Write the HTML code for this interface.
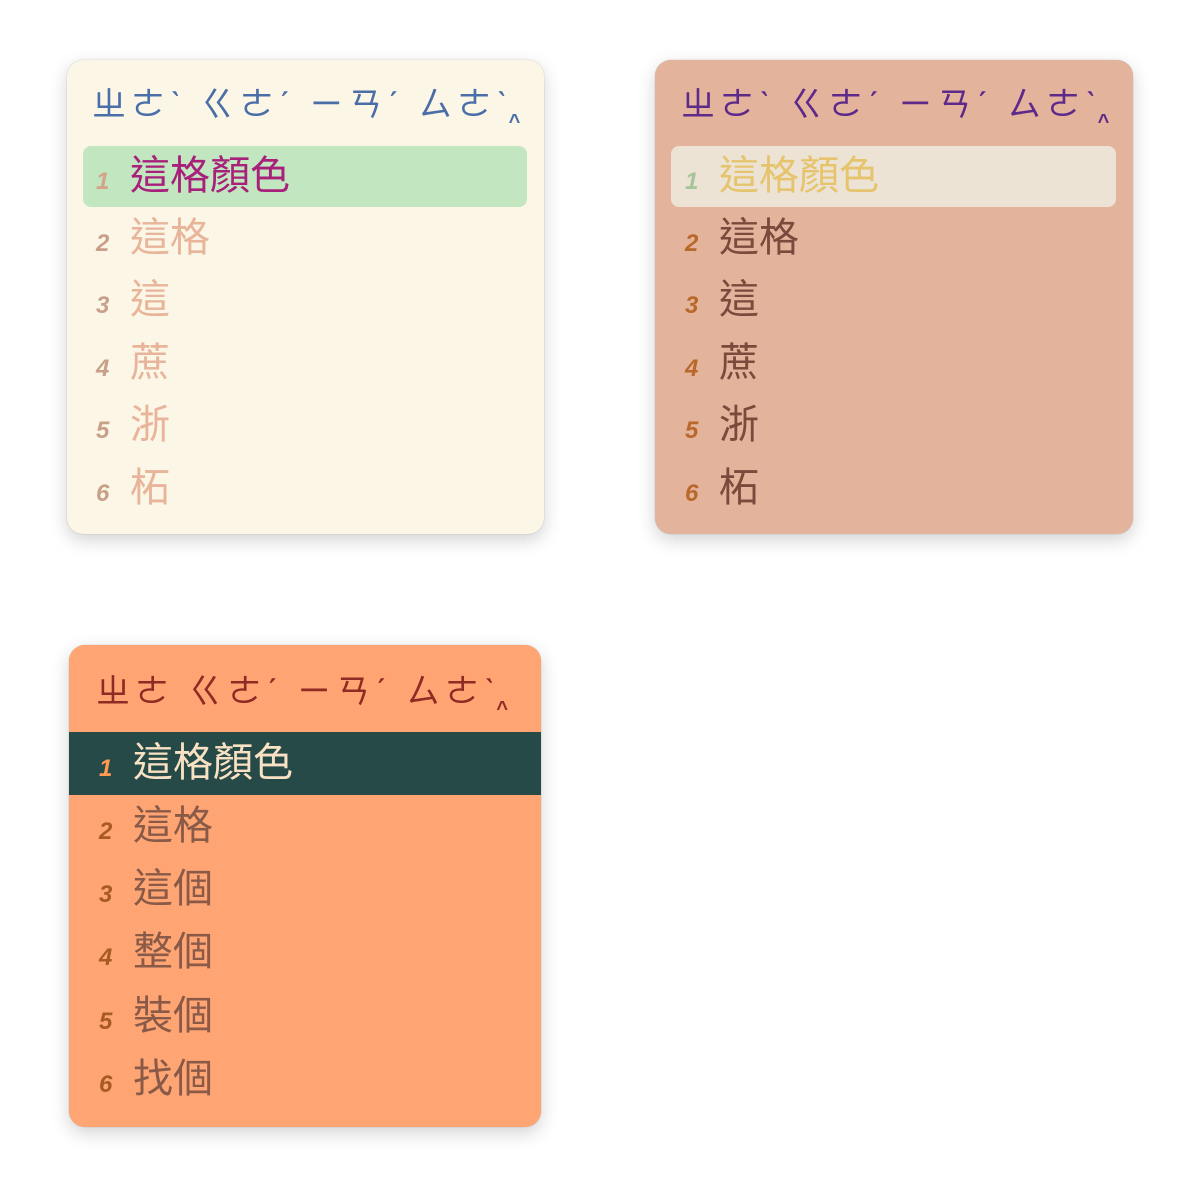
<!DOCTYPE html>
<html><head><meta charset="utf-8"><style>
body{margin:0;width:1200px;height:1200px;background:#fff;position:relative;overflow:hidden;font-family:"Liberation Sans","Noto Sans CJK TC",sans-serif}
.p{position:absolute;border-radius:16px;box-shadow:0 6px 18px rgba(0,0,0,.18),0 0 1px rgba(0,0,0,.3)}
.pre{position:absolute;font-size:34px;white-space:nowrap;letter-spacing:5px;line-height:40px}
.car{font-size:20px;font-weight:bold;position:relative;top:12px;left:-4px;letter-spacing:0}
.hl{position:absolute}
.r{position:absolute;height:62px;line-height:62px;white-space:nowrap}
.n{display:inline-block;width:34px;font-size:24px;font-weight:bold;font-style:italic}
.t{font-size:40px}
</style></head><body>

<div class="p" style="left:67px;top:60px;width:477px;height:474px;background:#fcf6e6"></div>
<div class="pre" style="left:92px;top:85px;color:#4a6ea8">ㄓㄜˋ ㄍㄜˊ ㄧㄢˊ ㄙㄜˋ<span class="car">^</span></div>
<div class="hl" style="left:83px;top:146px;width:444px;height:61px;background:#c1e6c0;border-radius:8px"></div>
<div class="r" style="left:96px;top:145px"><span class="n" style="color:#d4a38a">1</span><span class="t" style="color:#a8207a">這格顏色</span></div>
<div class="r" style="left:96px;top:207px;color:#e8b49a"><span class="n" style="color:#c8a08a">2</span><span class="t">這格</span></div>
<div class="r" style="left:96px;top:269px;color:#e8b49a"><span class="n" style="color:#c8a08a">3</span><span class="t">這</span></div>
<div class="r" style="left:96px;top:332px;color:#e8b49a"><span class="n" style="color:#c8a08a">4</span><span class="t">蔗</span></div>
<div class="r" style="left:96px;top:394px;color:#e8b49a"><span class="n" style="color:#c8a08a">5</span><span class="t">浙</span></div>
<div class="r" style="left:96px;top:457px;color:#e8b49a"><span class="n" style="color:#c8a08a">6</span><span class="t">柘</span></div>

<div class="p" style="left:655px;top:60px;width:478px;height:474px;background:#e3b49b"></div>
<div class="pre" style="left:681px;top:85px;color:#5e2a8a">ㄓㄜˋ ㄍㄜˊ ㄧㄢˊ ㄙㄜˋ<span class="car">^</span></div>
<div class="hl" style="left:671px;top:146px;width:445px;height:61px;background:#ede3d5;border-radius:8px"></div>
<div class="r" style="left:685px;top:145px"><span class="n" style="color:#a6c59a">1</span><span class="t" style="color:#e6c46e">這格顏色</span></div>
<div class="r" style="left:685px;top:207px;color:#7a4a3c"><span class="n" style="color:#b8682a">2</span><span class="t">這格</span></div>
<div class="r" style="left:685px;top:269px;color:#7a4a3c"><span class="n" style="color:#b8682a">3</span><span class="t">這</span></div>
<div class="r" style="left:685px;top:332px;color:#7a4a3c"><span class="n" style="color:#b8682a">4</span><span class="t">蔗</span></div>
<div class="r" style="left:685px;top:394px;color:#7a4a3c"><span class="n" style="color:#b8682a">5</span><span class="t">浙</span></div>
<div class="r" style="left:685px;top:457px;color:#7a4a3c"><span class="n" style="color:#b8682a">6</span><span class="t">柘</span></div>

<div class="p" style="left:69px;top:645px;width:472px;height:482px;background:#ffa573;overflow:hidden">
<div style="position:absolute;left:0;top:87px;width:472px;height:63px;background:#264a48"></div></div>
<div class="pre" style="left:96px;top:672px;color:#8f2a24">ㄓㄜ ㄍㄜˊ ㄧㄢˊ ㄙㄜˋ<span class="car">^</span></div>
<div class="r" style="left:99px;top:732px"><span class="n" style="color:#ff9a50">1</span><span class="t" style="color:#f9e2c4">這格顏色</span></div>
<div class="r" style="left:99px;top:795px;color:#8a5a48"><span class="n" style="color:#a85a25">2</span><span class="t">這格</span></div>
<div class="r" style="left:99px;top:858px;color:#8a5a48"><span class="n" style="color:#a85a25">3</span><span class="t">這個</span></div>
<div class="r" style="left:99px;top:921px;color:#8a5a48"><span class="n" style="color:#a85a25">4</span><span class="t">整個</span></div>
<div class="r" style="left:99px;top:985px;color:#8a5a48"><span class="n" style="color:#a85a25">5</span><span class="t">裝個</span></div>
<div class="r" style="left:99px;top:1048px;color:#8a5a48"><span class="n" style="color:#a85a25">6</span><span class="t">找個</span></div>
</body></html>
